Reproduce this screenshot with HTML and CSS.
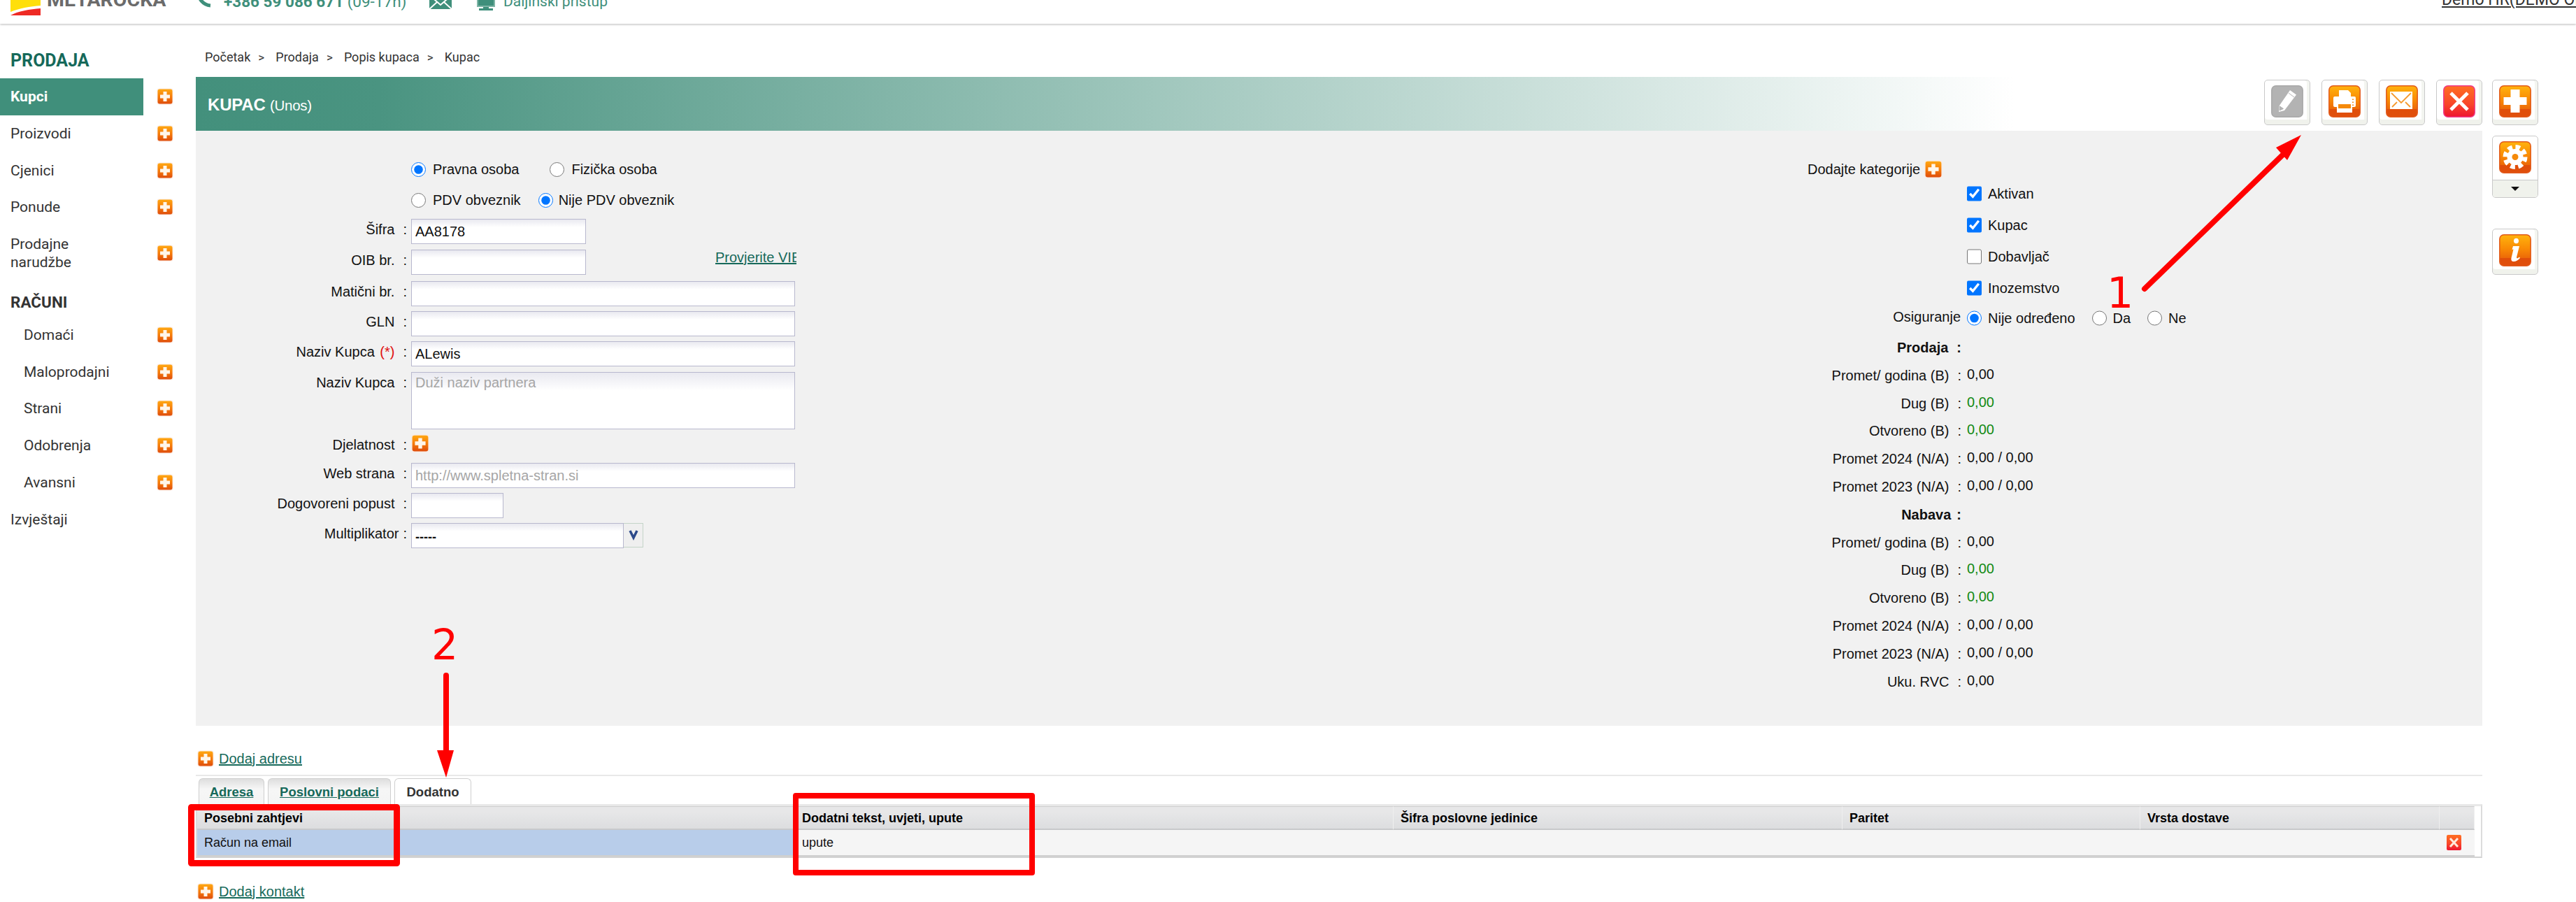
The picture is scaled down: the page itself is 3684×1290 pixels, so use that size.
FILE: index.html
```html
<!DOCTYPE html>
<html lang="hr">
<head>
<meta charset="utf-8">
<title>Kupac</title>
<link rel="stylesheet" href="styles.css">
</head>
<body>
<svg class="defs" aria-hidden="true">
  <defs>
    <linearGradient id="go" x1="0" y1="0" x2="0" y2="1">
      <stop offset="0" stop-color="#ffb30d"/><stop offset=".45" stop-color="#f98a05"/><stop offset=".74" stop-color="#ec6a08"/><stop offset=".76" stop-color="#e04e0a"/><stop offset="1" stop-color="#e04f0c"/>
    </linearGradient>
    <linearGradient id="gr" x1="0" y1="0" x2="0" y2="1">
      <stop offset="0" stop-color="#ff6f22"/><stop offset=".6" stop-color="#f8452a"/><stop offset="1" stop-color="#ee1430"/>
    </linearGradient>
    <linearGradient id="gs" x1="0" y1="0" x2="0" y2="1">
      <stop offset="0" stop-color="#ffa812"/><stop offset=".55" stop-color="#f4780a"/><stop offset="1" stop-color="#de4d0c"/>
    </linearGradient>
    <symbol id="i-plus-s" viewBox="0 0 24 24">
      <rect x=".5" y=".5" width="23" height="23" rx="3" fill="#fbe9df"/>
      <rect x="1.5" y="1.5" width="21" height="21" rx="3" fill="url(#gs)"/>
      <path d="M9.5 5h5v4.500h4.500v5h-4.500v4.500h-5v-4.500h-4.500v-5h4.500z" fill="#fff6ea"/>
    </symbol>
    <symbol id="i-x-s" viewBox="0 0 23 24">
      <rect x="1" y="1" width="21" height="22" rx="2" fill="url(#gr)"/>
      <path d="M6 6l11 12M17 6l-11 12" stroke="#ffe9dc" stroke-width="3"/>
    </symbol>
    <symbol id="i-pencil" viewBox="0 0 46 46">
      <rect x=".8" y=".8" width="44.400" height="44.400" rx="6" fill="#b3b3b3" stroke="#a8a8a8" stroke-width="1.500"/>
      <path d="M27 7l9 6.500-17 22.500-8 2 .8-9z" fill="#fff"/>
      <path d="M12.500 30l5 3.500-5.500 2.500zM25 11l8 6" fill="#b3b3b3" stroke="#b3b3b3" stroke-width="1"/>
    </symbol>
    <symbol id="i-print" viewBox="0 0 46 46">
      <rect x=".8" y=".8" width="44.400" height="44.400" rx="6" fill="url(#go)" stroke="#e25a1c" stroke-width="1.500"/>
      <path d="M15 16V7h13l4 4v5z" fill="#fff"/>
      <rect x="7" y="16" width="32" height="15" rx="2" fill="#fff"/>
      <rect x="12" y="26" width="22" height="13" fill="#fff"/>
      <rect x="14" y="27" width="18" height="6" fill="#f58a0a"/>
      <path d="M35 19.500v1.500M35 23.500v1.500M35 27.500v1.500" stroke="#f08a20" stroke-width="2"/>
    </symbol>
    <symbol id="i-mail" viewBox="0 0 46 46">
      <rect x=".8" y=".8" width="44.400" height="44.400" rx="6" fill="url(#go)" stroke="#e25a1c" stroke-width="1.500"/>
      <rect x="6" y="9" width="32" height="25" fill="#fff"/>
      <path d="M8 11l14 14 14-14M9 31l7-7M35 31l-7-7" fill="none" stroke="#f59a30" stroke-width="1.800"/>
    </symbol>
    <symbol id="i-x" viewBox="0 0 46 46">
      <rect x=".8" y=".8" width="44.400" height="44.400" rx="6" fill="url(#gr)" stroke="#f0388a" stroke-width="1.500"/>
      <path d="M11 11l24 24M35 11l-24 24" stroke="#fff" stroke-width="5"/>
    </symbol>
    <symbol id="i-plus" viewBox="0 0 46 46">
      <rect x=".8" y=".8" width="44.400" height="44.400" rx="6" fill="url(#go)" stroke="#e25a1c" stroke-width="1.500"/>
      <path d="M16.500 6h13v11h10v11h-10v11h-13v-11h-10v-11h10z" fill="#fff"/>
    </symbol>
    <symbol id="i-gear" viewBox="0 0 46 46">
      <rect x=".8" y=".8" width="44.400" height="44.400" rx="6" fill="url(#go)" stroke="#e25a1c" stroke-width="1.500"/>
      <circle cx="23" cy="22.500" r="11.500" fill="#fff"/>
      <circle cx="23" cy="22.500" r="14" fill="none" stroke="#fff" stroke-width="7" stroke-dasharray="6.500 4.500"/>
      <circle cx="23" cy="22.500" r="4.500" fill="#f58a0a"/>
    </symbol>
    <symbol id="i-info" viewBox="0 0 46 46">
      <rect x=".8" y=".8" width="44.400" height="44.400" rx="6" fill="url(#go)" stroke="#e25a1c" stroke-width="1.500"/>
      <ellipse cx="24.500" cy="9.500" rx="3.500" ry="3.800" fill="#fff"/>
      <path d="M20 17h9l-4 16c0 2 2 1.500 4-.5l1 1.500c-3 3.500-6 5-9 5s-4-2-3.500-5l3-12.500-2 .5z" fill="#fff"/>
    </symbol>
  </defs>
</svg>

<header class="topbar">
  <svg class="logo" viewBox="0 0 43 24" aria-hidden="true">
    <path d="M0 0h43v10C28 11 12 14 0 19z" fill="#ffdf0a"/>
    <path d="M0 24C10 18 28 15 43 14v10z" fill="#ee2a24"/>
  </svg>
  <span class="brand">METAROCKA</span>
  <svg class="ic-phone" viewBox="0 0 22 16" aria-hidden="true">
    <path d="M2 -6c0 8 6 17 17 18" fill="none" stroke="#3f8f7b" stroke-width="5"/>
  </svg>
  <span class="phone"><b>+386 59 086 671</b> (09-17h)</span>
  <svg class="ic-mail" viewBox="0 0 32 14" aria-hidden="true">
    <path d="M0 -8h32v22H0z" fill="#3f8f7b"/>
    <path d="M0 -6l16 14L32 -6M0 14l11-10M32 14L21 4" fill="none" stroke="#fff" stroke-width="2"/>
  </svg>
  <svg class="ic-screen" viewBox="0 0 30 16" aria-hidden="true">
    <path d="M3 -6h24v16H3z" fill="#3f8f7b" stroke="#7fb5a6" stroke-width="2"/>
    <path d="M11 11h8v2h6v3H5v-3h6z" fill="#3f8f7b"/>
  </svg>
  <span class="remote">Daljinski pristup</span>
  <a class="user" href="#">Demo HR(DEMO OM</a>
</header>

<div class="layout">
  <nav class="sidebar">
    <h2 class="nav-head nav-head-first">PRODAJA</h2>
    <div class="nav-item"><a class="nav-link nav-active" href="#">Kupci</a><svg class="plus"><use href="#i-plus-s"/></svg></div>
    <div class="nav-item"><a class="nav-link" href="#">Proizvodi</a><svg class="plus"><use href="#i-plus-s"/></svg></div>
    <div class="nav-item"><a class="nav-link" href="#">Cjenici</a><svg class="plus"><use href="#i-plus-s"/></svg></div>
    <div class="nav-item"><a class="nav-link" href="#">Ponude</a><svg class="plus"><use href="#i-plus-s"/></svg></div>
    <div class="nav-item nav-tall"><a class="nav-link" href="#">Prodajne<br>narudžbe</a><svg class="plus"><use href="#i-plus-s"/></svg></div>
    <h2 class="nav-head nav-head-two">RAČUNI</h2>
    <div class="nav-item nav-sub"><a class="nav-link" href="#">Domaći</a><svg class="plus"><use href="#i-plus-s"/></svg></div>
    <div class="nav-item nav-sub"><a class="nav-link" href="#">Maloprodajni</a><svg class="plus"><use href="#i-plus-s"/></svg></div>
    <div class="nav-item nav-sub"><a class="nav-link" href="#">Strani</a><svg class="plus"><use href="#i-plus-s"/></svg></div>
    <div class="nav-item nav-sub"><a class="nav-link" href="#">Odobrenja</a><svg class="plus"><use href="#i-plus-s"/></svg></div>
    <div class="nav-item nav-sub"><a class="nav-link" href="#">Avansni</a><svg class="plus"><use href="#i-plus-s"/></svg></div>
    <div class="nav-item"><a class="nav-link" href="#">Izvještaji</a></div>
  </nav>

  <main class="main">
    <div class="crumbs"><span>Početak</span><i>&gt;</i><span>Prodaja</span><i>&gt;</i><span>Popis kupaca</span><i>&gt;</i><span>Kupac</span></div>

    <div class="titlebar">
      <h1 class="title">KUPAC <small>(Unos)</small></h1>
      <div class="tools">
        <span class="tool"><svg class="ti"><use href="#i-pencil"/></svg></span>
        <span class="tool"><svg class="ti"><use href="#i-print"/></svg></span>
        <span class="tool"><svg class="ti"><use href="#i-mail"/></svg></span>
        <span class="tool"><svg class="ti"><use href="#i-x"/></svg></span>
      </div>
    </div>

    <section class="panel">
      <form class="form">
        <span></span>
        <div class="opts">
          <label class="opt opt-a"><input type="radio" name="t" checked>Pravna osoba</label>
          <label class="opt"><input type="radio" name="t">Fizička osoba</label>
        </div>
        <span></span>
        <div class="opts">
          <label class="opt opt-b"><input type="radio" name="p">PDV obveznik</label>
          <label class="opt opt-c"><input type="radio" name="p" checked>Nije PDV obveznik</label>
        </div>

        <span class="lbl">Šifra<em>:</em></span>
        <div><input class="fld fld-s" value="AA8178"></div>
        <span class="lbl">OIB br.<em>:</em></span>
        <div class="with-link"><input class="fld fld-s"><a class="vies" href="#">Provjerite VIES</a></div>
        <span class="lbl">Matični br.<em>:</em></span>
        <div><input class="fld fld-l"></div>
        <span class="lbl">GLN<em>:</em></span>
        <div><input class="fld fld-l"></div>
        <span class="lbl">Naziv Kupca <u class="req">(*)</u><em>:</em></span>
        <div><input class="fld fld-l" value="ALewis"></div>
        <span class="lbl">Naziv Kupca<em>:</em></span>
        <div><textarea class="fld fld-l fld-area" placeholder="Duži naziv partnera"></textarea></div>
        <span class="lbl">Djelatnost<em>:</em></span>
        <div><svg class="plus plus-form"><use href="#i-plus-s"/></svg></div>
        <span class="lbl">Web strana<em>:</em></span>
        <div><input class="fld fld-l" placeholder="http://www.spletna-stran.si"></div>
        <span class="lbl">Dogovoreni popust<em>:</em></span>
        <div><input class="fld fld-xs"></div>
        <span class="lbl lbl-tight">Multiplikator<em>:</em></span>
        <div class="sel"><span class="sel-box">-----</span><span class="sel-btn"><svg class="sel-arrow" viewBox="0 0 14 16"><path d="M2 3l5 10 5-10" fill="none" stroke="#2c4a8a" stroke-width="3.500"/></svg></span></div>
      </form>

      <aside class="side">
        <div class="cats">Dodajte kategorije<svg class="plus plus-cat"><use href="#i-plus-s"/></svg></div>
        <label class="chk"><input type="checkbox" checked>Aktivan</label>
        <label class="chk"><input type="checkbox" checked>Kupac</label>
        <label class="chk"><input type="checkbox">Dobavljač</label>
        <label class="chk chk-last"><input type="checkbox" checked>Inozemstvo</label>
        <div class="ins">
          <span class="ins-l">Osiguranje</span>
          <label class="ins-o"><input type="radio" name="o" checked>Nije određeno</label>
          <label class="ins-o"><input type="radio" name="o">Da</label>
          <label class="ins-o"><input type="radio" name="o">Ne</label>
        </div>
        <div class="st st-h"><b class="k">Prodaja<em>:</em></b></div>
        <div class="st"><span class="k">Promet/ godina (B)<em>:</em></span><span class="v">0,00</span></div>
        <div class="st"><span class="k">Dug (B)<em>:</em></span><span class="v g">0,00</span></div>
        <div class="st"><span class="k">Otvoreno (B)<em>:</em></span><span class="v g">0,00</span></div>
        <div class="st"><span class="k">Promet 2024 (N/A)<em>:</em></span><span class="v">0,00 / 0,00</span></div>
        <div class="st"><span class="k">Promet 2023 (N/A)<em>:</em></span><span class="v">0,00 / 0,00</span></div>
        <div class="st st-h"><b class="k k-near">Nabava<em>:</em></b></div>
        <div class="st"><span class="k">Promet/ godina (B)<em>:</em></span><span class="v">0,00</span></div>
        <div class="st"><span class="k">Dug (B)<em>:</em></span><span class="v g">0,00</span></div>
        <div class="st"><span class="k">Otvoreno (B)<em>:</em></span><span class="v g">0,00</span></div>
        <div class="st"><span class="k">Promet 2024 (N/A)<em>:</em></span><span class="v">0,00 / 0,00</span></div>
        <div class="st"><span class="k">Promet 2023 (N/A)<em>:</em></span><span class="v">0,00 / 0,00</span></div>
        <div class="st"><span class="k">Uku. RVC<em>:</em></span><span class="v">0,00</span></div>
      </aside>
    </section>

    <div class="add add-a"><svg class="plus"><use href="#i-plus-s"/></svg><a href="#">Dodaj adresu</a></div>
    <div class="rule"></div>
    <div class="tabs">
      <a class="tab tab-1" href="#">Adresa</a>
      <a class="tab tab-2" href="#">Poslovni podaci</a>
      <span class="tab tab-3">Dodatno</span>
    </div>
    <div class="grid">
      <div class="gh">Posebni zahtjevi</div>
      <div class="gh">Dodatni tekst, uvjeti, upute</div>
      <div class="gh">Šifra poslovne jedinice</div>
      <div class="gh">Paritet</div>
      <div class="gh">Vrsta dostave</div>
      <div class="gh"></div>
      <div class="gd gd-sel">Račun na email</div>
      <div class="gd">upute</div>
      <div class="gd"></div>
      <div class="gd"></div>
      <div class="gd"></div>
      <div class="gd gd-x"><svg class="xs"><use href="#i-x-s"/></svg></div>
    </div>
    <div class="add add-k"><svg class="plus"><use href="#i-plus-s"/></svg><a href="#">Dodaj kontakt</a></div>
  </main>

  <div class="rail">
    <span class="tool"><svg class="ti"><use href="#i-plus"/></svg></span>
    <span class="tool tool-gear"><svg class="ti"><use href="#i-gear"/></svg><span class="drop"><span class="caret"></span></span></span>
    <span class="tool tool-info"><svg class="ti"><use href="#i-info"/></svg></span>
  </div>
</div>

<svg class="notes" viewBox="0 0 3684 1290">
  <rect class="box" x="273.500" y="1154.500" width="294" height="80" stroke-width="9"/>
  <rect class="box" x="1138" y="1138" width="338" height="110" stroke-width="8"/>
  <line class="a1" x1="3067" y1="413" x2="3264" y2="222"/>
  <polygon class="head" points="3291,193 3255,211 3262,219 3271,229"/>
  <line class="a1" x1="638" y1="966" x2="638" y2="1080"/>
  <polygon class="head" points="638,1112 625,1073 649,1073"/>
  <text class="num" x="3013" y="440">1</text>
  <text class="num" x="617" y="943">2</text>
</svg>
</body>
</html>
```

FILE: styles.css
```css
html, body { margin: 0; padding: 0; background: #fff; }
body { width: 3684px; height: 1290px; overflow: hidden; position: relative; font: 20px/30px "Liberation Sans", Arial, sans-serif; color: #111; }
.defs { position: absolute; width: 0; height: 0; }
a { color: inherit; }
h1, h2 { margin: 0; }
input, textarea { font: inherit; }

/* top bar */
.topbar { height: 34px; box-sizing: border-box; display: flex; align-items: flex-end; padding: 0 0 12px 15px; overflow: hidden; box-shadow: 0 1px 3px rgba(0,0,0,.28); font-family: Roboto, sans-serif; position: relative; }
.logo { width: 43px; height: 24px; flex: none; }
.brand { margin: 0 0 7px 9px; font-size: 28.500px; line-height: 30px; font-weight: 700; color: #6b6b6b; width: 170px; flex: none; white-space: nowrap; }
.ic-phone { width: 22px; height: 16px; flex: none; margin: 0 0 10px 45px; }
.phone { margin: 0 0 8px 16px; width: 264px; flex: none; font-size: 22.500px; line-height: 24px; color: #3f8f7b; white-space: nowrap; }
.phone b { font-weight: 700; }
.ic-mail { width: 32px; height: 14px; flex: none; margin: 0 0 9px 30px; }
.ic-screen { width: 30px; height: 16px; flex: none; margin: 0 0 7px 34px; }
.remote { margin: 0 0 8px 10px; font-size: 21px; line-height: 24px; color: #3f8f7b; white-space: nowrap; }
.user { margin: 0 0 10px auto; width: 192px; flex: none; overflow: hidden; font-size: 23px; line-height: 24px; color: #333; white-space: nowrap; }

.layout { display: flex; align-items: flex-start; }

/* sidebar */
.sidebar { width: 280px; flex: none; font-family: Roboto, sans-serif; font-size: 21px; line-height: 26px; color: #333; }
.nav-head { font-size: 25px; line-height: 28px; font-weight: 700; padding-left: 15px; }
.nav-head-first { color: #16695a; margin: 39px 0 11px; }
.nav-head-two { color: #333; font-size: 22.500px; margin: 17px 0 7px; }
.nav-item { display: flex; align-items: center; height: 52.700px; }
.nav-tall { height: 78px; }
.nav-link { width: 205px; box-sizing: border-box; padding-left: 15px; text-decoration: none; flex: none; }
.nav-active { height: 53px; line-height: 53px; background: #408f7b; color: #fff; font-weight: 700; }
.nav-sub .nav-link { padding-left: 34px; }
.plus { width: 24px; height: 24px; flex: none; margin-left: 19px; }

/* main column */
.main { width: 3270px; flex: none; }
.crumbs { display: flex; height: 28px; line-height: 28px; margin: 34px 0 14px; padding-left: 13px; font-family: Roboto, sans-serif; font-size: 18px; color: #333; }
.crumbs i { font-style: normal; width: 0; margin: 0 25px 0 11px; font-size: 17px; }
.titlebar { height: 77px; box-sizing: border-box; padding: 4px 0 0 17px; display: flex; justify-content: space-between; align-items: flex-start; background: linear-gradient(90deg, #43907c 0, #4a9481 8%, #fff 79.500%); }
.title { font-size: 24px; line-height: 30px; margin-top: 21px; font-weight: 700; color: #fff; letter-spacing: -.2px; }
.title small { font-size: 20.500px; font-weight: 400; letter-spacing: -.3px; }
.tools { display: flex; gap: 16px; }
.tool { display: flex; flex-direction: column; align-items: center; box-sizing: border-box; width: 66px; height: 65px; padding-top: 7px; border: 1.500px solid #c9c9c9; border-radius: 5px; background: #fff; box-shadow: inset 0 -7px 0 #f0f2ec, inset -4px 0 0 #f3f5f0; }
.ti { width: 46px; height: 46px; flex: none; }

.rail { margin-left: 14px; padding-top: 80px; display: flex; flex-direction: column; }
.tool-gear { height: 89px; margin-top: 15px; box-shadow: none; }
.tool-info { height: 66px; margin-top: 44px; }
.drop { display: flex; justify-content: center; align-items: center; align-self: stretch; margin-top: 9px; height: 24px; border-top: 1.500px solid #c9c9c9; background: #f0f2ec; border-radius: 0 0 4px 4px; }
.caret { width: 0; height: 0; border: 6px solid transparent; border-top: 6px solid #111; border-bottom: 0; }

/* form panel */
.panel { height: 851px; box-sizing: border-box; display: flex; align-items: flex-start; background: #f1f1f1; padding-top: 42px; }
.form { width: 860px; flex: none; margin-top: 3px; display: grid; grid-template-columns: 302px 549px; column-gap: 6px; grid-template-rows: 44px 37px 44px 45px 43px 43px 44px 89px 41px 43px 43px 36px; }
.lbl { display: flex; justify-content: flex-end; white-space: pre; color: #111; }
.lbl em, .k em { font-style: normal; margin-left: 12px; }
.lbl-tight em { margin-left: 6px; }
.req { color: #e01010; text-decoration: none; margin-left: 2px; }
.opts { display: flex; align-items: flex-start; }
.opt { display: flex; align-items: center; gap: 10px; line-height: 21px; white-space: nowrap; }
.opt input { width: 21px; height: 21px; margin: 0; flex: none; }
.opt-a { margin-right: 44px; }
.opt-b { margin-right: 25px; }
.opt-c { gap: 8px; }
.fld { box-sizing: border-box; display: block; height: 36px; padding: 2px 5px; margin: 0; border: 1.500px solid #b8b8ce; border-radius: 0; outline: 0; background: linear-gradient(#e9e9f0, #fff 32%); color: #111; resize: none; }
.fld::placeholder { color: #a6a6a6; opacity: 1; }
.fld-s { width: 250px; }
.fld-l { width: 549px; }
.fld-xs { width: 132px; }
.fld-area { height: 82px; line-height: 24px; }
.with-link { display: flex; align-items: flex-start; }
.vies { width: 116px; margin-left: 185px; flex: none; overflow: hidden; white-space: nowrap; line-height: 22px; color: #16695a; }
.plus-form { margin: 0; width: 26px; height: 26px; display: block; }
.sel { display: flex; align-items: flex-start; }
.sel-box { box-sizing: border-box; width: 304px; height: 36px; padding: 0 5px; line-height: 38px; font-size: 18px; font-weight: 700; border: 1.500px solid #b8b8ce; background: linear-gradient(#e9e9f0, #fff 32%); }
.sel-btn { box-sizing: border-box; width: 28px; height: 35px; display: flex; justify-content: center; padding-top: 6px; border: 1px solid #c4d4c8; border-left: 0; background: #efefef; }
.sel-arrow { width: 14px; height: 18px; }

/* right column */
.side { margin-left: 1360px; width: 800px; flex: none; }
.cats { height: 37px; display: flex; align-items: flex-start; padding-left: 85px; line-height: 26px; white-space: nowrap; }
.plus-cat { margin: 0 0 0 6px; width: 26px; height: 26px; }
.chk { display: flex; align-items: center; gap: 9px; height: 22px; margin: 0 0 23px 313px; line-height: 24px; }
.chk-last { margin-bottom: 21px; }
.chk input, .ins input { width: 21px; height: 22px; margin: 0; flex: none; }
.ins { display: flex; align-items: center; height: 22px; margin-bottom: 16px; }
.ins-l { width: 304px; margin-right: 9px; text-align: right; margin-top: -4px; flex: none; }
.ins-o { display: flex; align-items: center; gap: 9px; margin-right: 24px; line-height: 24px; }
.st { height: 39.800px; display: flex; align-items: flex-start; }
.k { width: 305px; flex: none; margin-right: 8px; display: flex; justify-content: flex-end; white-space: pre; }
.k em { margin-left: 12px; }
.k-near em { margin-left: 8px; }
.st-h em { font-weight: 700; }
.v { margin-top: -2px; white-space: nowrap; }
.g { color: #128a12; }

/* lower area */
.add { display: flex; align-items: center; height: 24px; }
.add .plus { margin: 0 7px 0 2px; }
.add a { color: #16695a; }
.add-a { margin-top: 35px; }
.add-k { margin-top: 36px; }
.rule { height: 2px; margin-top: 11px; background: #e8e8e8; }
.tabs { display: flex; gap: 5px; margin: 3px 0 0 4px; height: 37px; }
.tab { box-sizing: border-box; display: block; height: 37px; border: 1.500px solid #cfcfcf; border-bottom: 0; border-radius: 6px 6px 0 0; text-align: center; font-size: 18.500px; line-height: 38px; font-weight: 700; color: #16695a; background: linear-gradient(#dedede, #f6f6f6 40%, #f4f4f4); }
.tab-1 { width: 94px; }
.tab-2 { width: 176px; }
.tab-3 { width: 110px; color: #333; background: #fff; }
.grid { box-sizing: border-box; height: 77px; display: grid; grid-template-columns: 855px 856px 642px 426px 428px 50px; grid-template-rows: 34px 38px; padding-right: 9px; border-top: 3px solid #e8e8e8; border-left: 2px solid #dcdcdc; border-right: 2px solid #dcdcdc; border-bottom: 2px solid #d2d2d2; font-size: 18px; line-height: 32px; }
.gh { box-sizing: border-box; padding-left: 10px; font-weight: 700; color: #000; background: linear-gradient(#e7e7e8 25%, #dcdddf); border-top: 1px solid #d0d0d0; border-bottom: 2px solid #c8c9cb; border-right: 1px solid #efefef; white-space: nowrap; }
.gd { box-sizing: border-box; padding-left: 10px; line-height: 36px; background: #f5f5f5; border-bottom: 2px solid #cfcfcf; color: #111; }
.gd-sel { background: #b8cdea; }
.gd-x { display: flex; align-items: center; padding-left: 9px; }
.xs { width: 23px; height: 24px; display: block; }

/* annotations laid over the page */
.notes { position: absolute; left: 0; top: 0; width: 3684px; height: 1290px; pointer-events: none; }
.box { fill: none; stroke: #ff0000; stroke-linejoin: round; }
.a1 { stroke: #ff0000; stroke-width: 8; stroke-linecap: round; }
.head { fill: #ff0000; }
.num { font-family: "DejaVu Sans", sans-serif; font-size: 60px; fill: #ff0000; }
```
